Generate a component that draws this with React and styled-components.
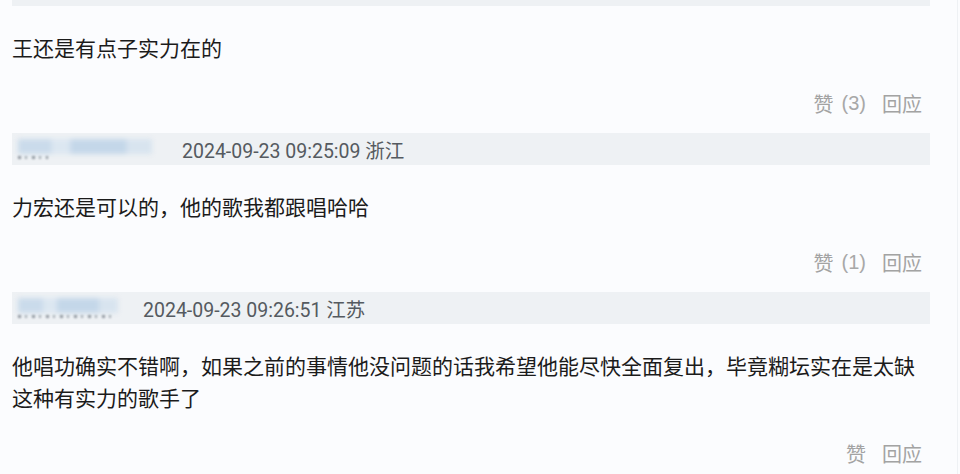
import React from "react";
import styled, { createGlobalStyle } from "styled-components";

const Global = createGlobalStyle`
  html, body {
    margin: 0;
    padding: 0;
    background: #fbfcfe;
  }
  body {
    font-family: "Noto Sans CJK SC", "Liberation Sans", sans-serif;
    overflow: hidden;
  }
`;

const Page = styled.div`
  width: 957px;
  height: 474px;
  border-right: 1px solid #eef1f4;
  background: #fbfcfe;
  overflow: hidden;
`;

const List = styled.div`
  width: 918px;
  padding-left: 12px;
`;

const Item = styled.div`
  display: flex;
  flex-direction: column;
`;

const Header = styled.div`
  height: ${(p) => (p.$cut ? "6px" : "32px")};
  background: #eef1f4;
  display: flex;
  align-items: center;
  padding-left: 6px;
  overflow: hidden;
`;

const NameBlur = styled.span`
  position: relative;
  display: inline-block;
  width: ${(p) => p.$w}px;
  height: 24px;
  margin-top: 2px;
  flex-shrink: 0;
`;

const BlurBand = styled.span`
  position: absolute;
  left: 0;
  top: 1px;
  right: 0;
  height: 15px;
  filter: blur(2.5px);
  background: linear-gradient(
    to right,
    #cadbeb 0%,
    #cadbeb 24%,
    #dce7f1 26%,
    #dce7f1 38%,
    #c4d7e9 40%,
    #c4d7e9 80%,
    #d8e4ef 82%,
    #d8e4ef 100%
  );
`;

const BlurInk = styled.span`
  position: absolute;
  left: 0;
  bottom: 3px;
  width: ${(p) => p.$w}px;
  height: 3px;
  filter: blur(0.8px);
  background: repeating-linear-gradient(
    to right,
    #5d6670 0 3px,
    transparent 3px 7px,
    #7c858f 7px 9px,
    transparent 9px 14px
  );
  opacity: 0.65;
`;

const Meta = styled.span`
  margin-left: ${(p) => p.$gap}px;
  font-family: Roboto, "Noto Sans CJK SC", sans-serif;
  font-size: 19.5px;
  color: #555a60;
  white-space: nowrap;
`;

const Body = styled.div`
  padding-top: 25px;
  font-size: 21px;
  line-height: 32px;
  color: #1b1b1b;
  word-break: break-all;
`;

const Actions = styled.div`
  margin-top: 26px;
  height: 28px;
  padding-bottom: 16px;
  padding-right: 8px;
  display: flex;
  justify-content: flex-end;
  align-items: center;
  gap: 16px;
  font-size: 20px;
  color: #a3a3a3;
`;

const Like = styled.span`
  display: flex;
  align-items: center;
  gap: 8px;
`;

const Count = styled.span`
  font-family: "Liberation Sans", sans-serif;
  font-size: 20px;
  color: #a8a8a8;
`;

const comments = [
  {
    cut: true,
    text: "王还是有点子实力在的",
    likes: 3,
  },
  {
    name: 134,
    ink: 30,
    gap: 30,
    meta: "2024-09-23 09:25:09 浙江",
    text: "力宏还是可以的，他的歌我都跟唱哈哈",
    likes: 1,
  },
  {
    name: 100,
    ink: 98,
    gap: 25,
    meta: "2024-09-23 09:26:51 江苏",
    text:
      "他唱功确实不错啊，如果之前的事情他没问题的话我希望他能尽快全面复出，毕竟糊坛实在是太缺这种有实力的歌手了",
    likes: 0,
  },
];

function Comment({ c }) {
  return (
    <Item>
      <Header $cut={c.cut}>
        {!c.cut && (
          <>
            <NameBlur $w={c.name}>
              <BlurBand />
              <BlurInk $w={c.ink} />
            </NameBlur>
            <Meta $gap={c.gap}>{c.meta}</Meta>
          </>
        )}
      </Header>
      <Body>{c.text}</Body>
      <Actions>
        <Like>
          赞{c.likes > 0 && <Count>({c.likes})</Count>}
        </Like>
        <span>回应</span>
      </Actions>
    </Item>
  );
}

export default function App() {
  return (
    <>
      <Global />
      <Page>
        <List>
          {comments.map((c, i) => (
            <Comment key={i} c={c} />
          ))}
        </List>
      </Page>
    </>
  );
}
